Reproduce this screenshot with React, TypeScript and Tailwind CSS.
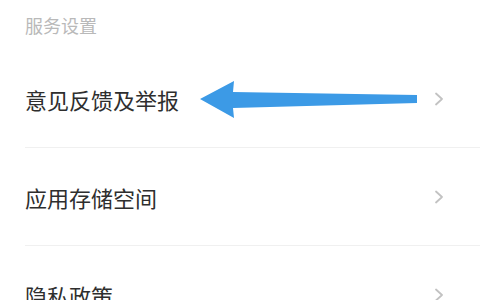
import React from "react";

const Chevron = () => (
  <svg width="10" height="14" viewBox="0 0 10 14" className="shrink-0">
    <path d="M2 1.5 L8 7 L2 12.5" fill="none" stroke="#c2c2c2" strokeWidth="1.8" strokeLinecap="round" strokeLinejoin="round" />
  </svg>
);

const Row = ({ label, arrow }: { label: string; arrow?: boolean }) => (
  <div className="relative flex h-[97px] items-center justify-between pl-[25px] pr-[36px]">
    <span className="text-[22px] leading-none text-[#2e2e2e]">{label}</span>
    <Chevron />
    {arrow && (
      <svg className="absolute left-[198px] top-[31px]" width="222" height="40" viewBox="0 0 222 40">
        <path d="M2 18 L36 0 L35 11 L219 14 L219 22 L35 27 L36 37 Z" fill="#3c9ae6" />
      </svg>
    )}
  </div>
);

export default function App() {
  return (
    <div
      className="h-[300px] w-[480px] overflow-hidden bg-white"
      style={{ fontFamily: '"Noto Sans CJK SC", "Noto Sans", sans-serif' }}
    >
      <div className="flex h-[50px] items-center pl-[25px] text-[18px] leading-none text-[#b9b9b9]">服务设置</div>
      <Row label="意见反馈及举报" arrow />
      <div className="ml-[25px] h-px bg-[#f0f0f0]" />
      <Row label="应用存储空间" />
      <div className="ml-[25px] h-px bg-[#f0f0f0]" />
      <Row label="隐私政策" />
    </div>
  );
}
